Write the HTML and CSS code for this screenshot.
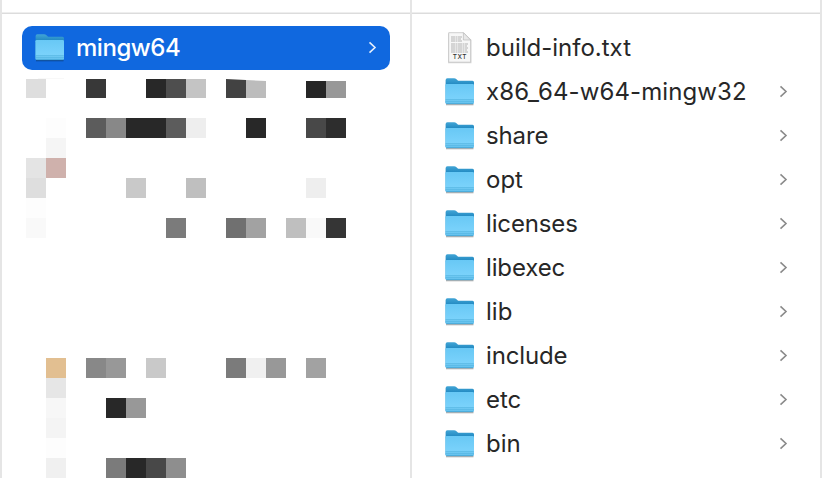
FILE: index.html
```
<!DOCTYPE html>
<html lang="en">
<head>
<meta charset="utf-8">
<title>mingw64</title>
<link rel="stylesheet" href="styles.css">
</head>
<body>
<svg class="defs" width="0" height="0" aria-hidden="true">
  <defs>
    <linearGradient id="back" x1="0" y1="0" x2="0" y2="1"><stop offset="0" stop-color="#42a5d6"/><stop offset=".28" stop-color="#1f87c0"/></linearGradient>
    <linearGradient id="front" x1="0" y1="0" x2="0" y2="1"><stop offset="0" stop-color="#68c8f5"/><stop offset=".75" stop-color="#7ad2fb"/><stop offset="1" stop-color="#60bdea"/></linearGradient>
    <symbol id="folder" viewBox="0 0 32 30">
      <path d="M2 27.5h27.5" stroke="#000" stroke-opacity=".3" stroke-width="1.6"/>
      <path d="M1.6 3.2Q1.6 1.2 3.4 1.2H10Q11.5 1.2 12.5 2.2L13.5 3.2Q14.1 3.7 15.5 3.7H28.5Q30 3.7 30 5.3V26H1.6Z" fill="url(#back)"/>
      <path d="M1.4 8.3Q1.4 7 2.6 7H28.8Q30 7 30 8.3V25.4Q30 27 28.5 27H2.9Q1.4 27 1.4 25.4Z" fill="url(#front)"/>
      <path d="M1.6 22.6H29.8M1.6 24.4H29.8" stroke="#4eaedb" stroke-width=".6"/>
      <path d="M2.2 26.7H29.2" stroke="#3e9fd0" stroke-width=".7"/>
    </symbol>
    <symbol id="chevron" viewBox="0 0 10 14"><path d="M1.5 1.3 7 6.5 1.5 11.7" fill="none" stroke="currentColor" stroke-width="1.6"/></symbol>
  </defs>
</svg>
<main class="finder">
  <section class="column">
    <div class="header"></div>
    <div class="row selected"><svg class="icon"><use href="#folder"/></svg><span class="name">mingw64</span><svg class="chevron"><use href="#chevron"/></svg></div>
    <svg class="mosaic" viewBox="26 78 320 400">
      <path fill="#dedede" d="M26 79h20v19h-20zM26 178h20v20h-20z"/>
      <path fill="#f8f8f8" d="M38 78h26v1h-26z"/>
      <path fill="#383838" d="M86 79h20v19h-20z"/>
      <path fill="#282828" d="M146 79h20v19h-20zM126 118h40v20h-40zM246 118h20v20h-20zM106 398h20v20h-20zM126 458h20v20h-20z"/>
      <path fill="#4e4e4e" d="M166 79h20v19h-20z"/>
      <path fill="#c4c4c4" d="M186 79h20v19h-20z"/>
      <path fill="#424242" d="M226 79l20 1v18h-20z"/>
      <path fill="#bcbcbc" d="M246 80l20 1v17h-20z"/>
      <path fill="#262626" d="M306 81h20v17h-20z"/>
      <path fill="#989898" d="M326 81h20v17h-20zM106 358h20v20h-20zM126 398h20v20h-20zM266 358h20v20h-20z"/>
      <path fill="#fdfdfd" d="M46 118h20v20h-20zM26 198h20v20h-20zM46 438h20v20h-20z"/>
      <path fill="#5c5c5c" d="M86 118h20v20h-20zM166 118h20v20h-20z"/>
      <path fill="#888" d="M106 118h20v20h-20zM86 358h20v20h-20z"/>
      <path fill="#eee" d="M186 118h20v20h-20zM306 178h20v20h-20z"/>
      <path fill="#484848" d="M306 118h20v20h-20zM146 458h20v20h-20z"/>
      <path fill="#2d2d2d" d="M326 118h20v20h-20z"/>
      <path fill="#f5f5f5" d="M46 138h20v20h-20z"/>
      <path fill="#e4e4e4" d="M26 158h20v20h-20z"/>
      <path fill="#cfb1ac" d="M46 158h20v20h-20z"/>
      <path fill="#c9c9c9" d="M126 178h20v20h-20zM146 358h20v20h-20z"/>
      <path fill="#bfbfbf" d="M186 178h20v20h-20zM286 218h20v20h-20z"/>
      <path fill="#f9f9f9" d="M26 218h20v20h-20zM306 218h20v20h-20z"/>
      <path fill="#7b7b7b" d="M166 218h20v20h-20zM226 358h20v20h-20zM106 458h20v20h-20z"/>
      <path fill="#707070" d="M226 218h20v20h-20z"/>
      <path fill="#a2a2a2" d="M246 218h20v20h-20zM306 358h20v20h-20z"/>
      <path fill="#353535" d="M326 218h20v20h-20z"/>
      <path fill="#e2bf91" d="M46 358h20v20h-20z"/>
      <path fill="#f0f0f0" d="M246 358h20v20h-20zM46 458h20v20h-20z"/>
      <path fill="#e6e6e6" d="M46 378h20v20h-20z"/>
      <path fill="#f7f7f7" d="M46 398h20v20h-20z"/>
      <path fill="#f4f4f4" d="M46 418h20v20h-20z"/>
      <path fill="#8e8e8e" d="M166 458h20v20h-20z"/>
    </svg>
  </section>
  <section class="column">
    <div class="header"></div>
    <div class="row"><svg class="icon" viewBox="0 0 32 30">
      <path d="M4 30.2V.5H20.5L27.5 7V30.2Z" fill="#000" opacity=".16"/>
      <path d="M4.7-.3H19.6L26.6 6.7V29.2H4.7Z" fill="#f7f7f7" stroke="#c4c4c4" stroke-width=".8"/>
      <path d="M7 4h11M7 6h10M7 8h11M7 11h17M7 13h16M7 15h17M7 17h16M7 19h17" stroke="#b4b4b4" stroke-width="1.1" stroke-dasharray="4 .5 2 .5"/>
      <path d="M19.4-.3V7H26.6Z" fill="#e8e8e8" stroke="#bcbcbc" stroke-width=".7"/>
      <text class="badge" x="15.9" y="26.1" text-anchor="middle">TXT</text>
    </svg><span class="name">build-info.txt</span></div>
    <div class="row"><svg class="icon"><use href="#folder"/></svg><span class="name target">x86_64-w64-mingw32</span><svg class="chevron"><use href="#chevron"/></svg></div>
    <div class="row"><svg class="icon"><use href="#folder"/></svg><span class="name tight">share</span><svg class="chevron"><use href="#chevron"/></svg></div>
    <div class="row"><svg class="icon"><use href="#folder"/></svg><span class="name">opt</span><svg class="chevron"><use href="#chevron"/></svg></div>
    <div class="row"><svg class="icon"><use href="#folder"/></svg><span class="name tight">licenses</span><svg class="chevron"><use href="#chevron"/></svg></div>
    <div class="row"><svg class="icon"><use href="#folder"/></svg><span class="name tight">libexec</span><svg class="chevron"><use href="#chevron"/></svg></div>
    <div class="row"><svg class="icon"><use href="#folder"/></svg><span class="name">lib</span><svg class="chevron"><use href="#chevron"/></svg></div>
    <div class="row"><svg class="icon"><use href="#folder"/></svg><span class="name tight">include</span><svg class="chevron"><use href="#chevron"/></svg></div>
    <div class="row"><svg class="icon"><use href="#folder"/></svg><span class="name">etc</span><svg class="chevron"><use href="#chevron"/></svg></div>
    <div class="row"><svg class="icon"><use href="#folder"/></svg><span class="name">bin</span><svg class="chevron"><use href="#chevron"/></svg></div>
  </section>
</main>
</body>
</html>
```
FILE: styles.css
```
* { box-sizing: border-box; }
body { margin: 0; background: #fff; overflow: hidden; }
.defs { display: block; }
.finder {
  display: flex;
  width: 822px;
  height: 478px;
  border-right: 2px solid #e5e5e5;
  font-family: Inter, "Liberation Sans", sans-serif;
  font-size: 24px;
  color: #272727;
}
.column { width: 410px; border-left: 2px solid #e5e5e5; }
.header { height: 14px; margin-bottom: 12px; border-bottom: 1px solid #dcdcdc; box-shadow: inset 0 -1px #eee; }
.row { display: flex; align-items: center; height: 44px; margin: 0 20px; padding: 0 12px; border-radius: 10px; }
.selected { width: 368px; background: #1068df; color: #fff; }
.icon { display: block; flex: none; width: 32px; height: 30px; overflow: visible; }
.name { margin-left: 10px; line-height: 44px; white-space: nowrap; }
.target { letter-spacing: .1px; }
.tight { letter-spacing: -.14px; }
.chevron { flex: none; width: 10px; height: 14px; margin: 0 -1px 0 auto; color: #8a8a8a; }
.selected .chevron { margin-right: 0; color: #e6effc; }
.selected .name { font-weight: 500; letter-spacing: -.45px; }
.mosaic { display: block; width: 320px; height: 400px; margin: 8px 0 0 24px; }
.badge { font: 500 6.4px Inter, sans-serif; letter-spacing: .5px; fill: #333; }
```
